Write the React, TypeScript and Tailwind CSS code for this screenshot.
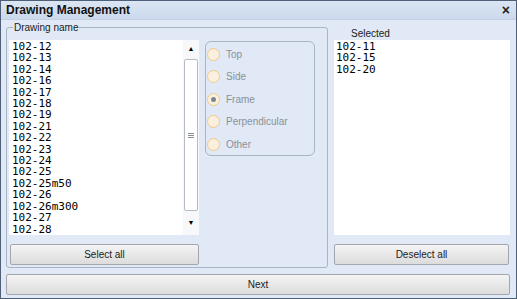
import React from 'react';

const drawings = [
  '102-12', '102-13', '102-14', '102-16', '102-17', '102-18', '102-19', '102-21', '102-22',
  '102-23', '102-24', '102-25', '102-25m50', '102-26', '102-26m300', '102-27', '102-28', '102-29', '102-30',
];

const selected = ['102-11', '102-15', '102-20'];

const views = [
  { label: 'Top', checked: false },
  { label: 'Side', checked: false },
  { label: 'Frame', checked: true },
  { label: 'Perpendicular', checked: false },
  { label: 'Other', checked: false },
];

const ui = "font-['Liberation_Sans',Arial,sans-serif]";
const mono = "font-['DejaVu_Sans_Mono',monospace] text-[11px] leading-[11.4px] text-black";

function Button({ label, className }: { label: string; className: string }) {
  return (
    <button
      className={`h-[21px] rounded-[2px] border border-[#a3a7ad] bg-gradient-to-b from-[#f4f4f4] to-[#dcdcdc] text-[10px] text-[#1b1b1b] ${ui} ${className}`}
    >
      {label}
    </button>
  );
}

export default function App() {
  return (
    <div className={`w-[517px] h-[299px] border border-[#4f5f78] bg-[#e0e9f5] flex flex-col ${ui}`}>
      {/* Title bar */}
      <div className="h-[19px] shrink-0 flex items-center justify-between pl-[5px] pr-[6px] bg-gradient-to-b from-[#dbe6f4] to-[#cbd9ec] border-b border-[#c3d0e2]">
        <span className="text-[12px] font-bold text-[#111]">Drawing Management</span>
        <span className="text-[14px] font-bold leading-none text-[#222]">×</span>
      </div>

      <div className="flex gap-[6px] pl-[5px] pr-[6px] pt-[1px]">
        {/* Drawing name group */}
        <fieldset className="w-[322px] h-[247px] border border-[#a8b5c7] rounded-[3px] pl-[2px] pr-[4px]">
          <legend className="ml-[4px] px-[1px] text-[10px] leading-[13px] text-[#1b1b1b]">Drawing name</legend>
          <div className="flex gap-[6px] pt-[6px]">
            <div className="flex h-[195px] bg-white">
              <div className={`w-[174px] overflow-hidden pl-[3px] pt-[1px] ${mono}`}>
                {drawings.map((d) => (
                  <div key={d}>{d}</div>
                ))}
              </div>
              {/* scrollbar */}
              <div className="w-[16px] flex flex-col items-center bg-[#f7f8fa]">
                <div className="h-[19px] flex items-center justify-center text-[7px] text-black">▲</div>
                <div className="w-[14px] flex-1 border border-[#b7bcc4] rounded-[2px] bg-white flex items-center justify-center">
                  <div className="flex flex-col gap-[1px]">
                    <div className="w-[6px] h-px bg-[#8a8f96]" />
                    <div className="w-[6px] h-px bg-[#8a8f96]" />
                    <div className="w-[6px] h-px bg-[#8a8f96]" />
                  </div>
                </div>
                <div className="h-[24px] flex items-center justify-center text-[7px] text-black">▼</div>
              </div>
            </div>
            <div className="w-[110px] h-[115px] mt-[1px] border border-[#a8b5c7] rounded-[6px] flex flex-col gap-[10.5px] pl-[1px] pt-[6px]">
              {views.map((v) => (
                <div key={v.label} className="flex items-center gap-[6px] h-[12px]">
                  <span className="w-[13px] h-[13px] rounded-full border border-[#efc98f] bg-[#fbf0de] flex items-center justify-center">
                    {v.checked && <span className="w-[5px] h-[5px] rounded-full bg-[#7d8697]" />}
                  </span>
                  <span className="text-[10px] text-[#8b9099]">{v.label}</span>
                </div>
              ))}
            </div>
          </div>
          <div className="pt-[6px] pl-[1px]">
            <Button label="Select all" className="w-[189px]" />
          </div>
        </fieldset>

        {/* Selected column */}
        <div className="w-[176px] flex flex-col">
          <div className="h-[19px] pt-[5px] pl-[17px] text-[10px] text-[#1b1b1b]">Selected</div>
          <div className={`h-[195px] bg-white pl-[2px] pt-[1px] ${mono}`}>
            {selected.map((s) => (
              <div key={s}>{s}</div>
            ))}
          </div>
          <div className="pt-[6px]">
            <Button label="Deselect all" className="w-[175px]" />
          </div>
        </div>
      </div>

      <div className="pl-[5px] pr-[6px] pt-[3px]">
        <Button label="Next" className="w-full" />
      </div>
    </div>
  );
}
